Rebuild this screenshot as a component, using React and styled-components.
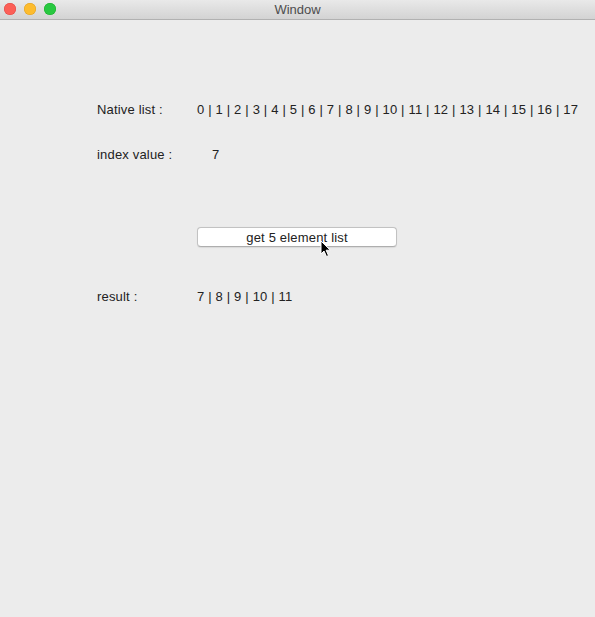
import React from "react";
import styled, { createGlobalStyle } from "styled-components";

const GlobalStyle = createGlobalStyle`
  html, body {
    margin: 0;
    padding: 0;
    background: #ececec;
  }
  body {
    font-family: "Liberation Sans", Arial, sans-serif;
    -webkit-font-smoothing: antialiased;
  }
`;

const Window = styled.div`
  position: relative;
  width: 595px;
  height: 617px;
  background: #ececec;
  overflow: hidden;
`;

const TitleBar = styled.div`
  position: relative;
  height: 19px;
  display: flex;
  align-items: center;
  justify-content: center;
  background: linear-gradient(#e9e9e9, #d3d3d3);
  border-bottom: 1px solid #b1b1b1;
  font-size: 13px;
  color: #4d4d4d;
`;

const Lights = styled.div`
  position: absolute;
  left: 4px;
  top: 3px;
  display: flex;
  gap: 8px;
`;

const Light = styled.span`
  width: 12px;
  height: 12px;
  border-radius: 50%;
  background: ${(p) => p.color};
  box-shadow: inset 0 0 0 0.5px ${(p) => p.edge};
`;

const Content = styled.div`
  display: flex;
  flex-direction: column;
  padding: 73px 0 0 97px;
  font-size: 13px;
  color: #222;
  letter-spacing: 0.18px;
`;

const Row = styled.div`
  display: flex;
  align-items: center;
  height: 32px;
  margin-bottom: ${(p) => p.gap || 0}px;
`;

const Label = styled.div`
  width: 100px;
  flex-shrink: 0;
`;

const Value = styled.div`
  padding-left: ${(p) => p.indent || 0}px;
  white-space: nowrap;
`;

const Button = styled.button`
  width: 200px;
  height: 20px;
  padding: 0;
  background: #fff;
  border: 1px solid #c2c2c2;
  border-bottom-color: #aeaeae;
  border-radius: 4px;
  box-shadow: 0 0.5px 1px rgba(0, 0, 0, 0.08);
  font-family: inherit;
  font-size: 13px;
  letter-spacing: 0.18px;
  color: #222;
`;

const Cursor = styled.svg`
  position: absolute;
  left: 320px;
  top: 240px;
`;

const numbers = Array.from({ length: 18 }, (_, i) => i);

export default function App() {
  return (
    <>
      <GlobalStyle />
      <Window>
        <TitleBar>
          <Lights>
            <Light color="#fc5f57" edge="#df4744" />
            <Light color="#fdbc2e" edge="#de9f22" />
            <Light color="#28c840" edge="#1aab29" />
          </Lights>
          Window
        </TitleBar>

        <Content>
          <Row gap={13}>
            <Label>Native list :</Label>
            <Value>{numbers.join(" | ")}</Value>
          </Row>
          <Row gap={51}>
            <Label>index value :</Label>
            <Value indent={15}>7</Value>
          </Row>
          <Row gap={27}>
            <Label />
            <Button>get 5 element list</Button>
          </Row>
          <Row>
            <Label>result :</Label>
            <Value>7 | 8 | 9 | 10 | 11</Value>
          </Row>
        </Content>

        {/* mouse pointer */}
        <Cursor width="12" height="18" viewBox="0 0 12 18">
          <path
            d="M1 1 L1 14 L4 11 L6.5 16.5 L8.5 15.6 L6.1 10.2 L10.3 10.2 Z"
            fill="#000"
            stroke="#fff"
            strokeWidth="1"
            strokeLinejoin="round"
          />
        </Cursor>
      </Window>
    </>
  );
}
